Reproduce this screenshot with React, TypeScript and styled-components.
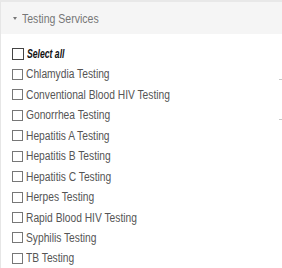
import React from 'react';
import styled, { createGlobalStyle } from 'styled-components';

const GlobalStyle = createGlobalStyle`
  html, body {
    margin: 0;
    padding: 0;
    background: #fff;
  }
  body {
    font-family: 'Liberation Sans', Arial, sans-serif;
  }
`;

const Panel = styled.div`
  width: 282px;
  height: 268px;
  box-sizing: border-box;
  border-top: 2px solid #e8e8e8;
  border-left: 1px solid #e6e6e6;
  overflow: hidden;
  position: relative;
`;

const Header = styled.div`
  height: 32px;
  background: #f5f5f5;
  display: flex;
  align-items: center;
  padding-left: 12px;
  gap: 5px;
  color: #777;
  font-size: 13.5px;
`;

const Caret = styled.span`
  width: 0;
  height: 0;
  border-left: 2.5px solid transparent;
  border-right: 2.5px solid transparent;
  border-top: 3px solid #777;
  margin-top: 1px;
`;

// the source renders a narrow face; squeeze the text to match its widths
const Narrow = styled.span<{ $scale: number }>`
  display: inline-block;
  white-space: nowrap;
  transform: scaleX(${(p) => p.$scale});
  transform-origin: left center;
`;

const List = styled.div`
  display: flex;
  flex-direction: column;
  padding: 13px 0 0 11px;
  gap: 6.45px;
`;

const Row = styled.label<{ $bold?: boolean }>`
  display: flex;
  align-items: center;
  height: 14px;
  gap: 3px;
  font-size: ${(p) => (p.$bold ? 12 : 12.5)}px;
  color: ${(p) => (p.$bold ? '#111' : '#555')};
  font-weight: ${(p) => (p.$bold ? 700 : 400)};
  font-style: ${(p) => (p.$bold ? 'italic' : 'normal')};
`;

const Box = styled.span<{ $big?: boolean }>`
  box-sizing: border-box;
  width: ${(p) => (p.$big ? 12 : 11)}px;
  height: ${(p) => (p.$big ? 12 : 11)}px;
  border: 1px solid ${(p) => (p.$big ? '#444' : '#777')};
  background: #fff;
  flex: none;
`;

const Tick = styled.span<{ $top: number }>`
  position: absolute;
  right: 0;
  top: ${(p) => p.$top}px;
  width: 3px;
  height: 1px;
  background: #c8c8c8;
`;

const services = [
  'Chlamydia Testing',
  'Conventional Blood HIV Testing',
  'Gonorrhea Testing',
  'Hepatitis A Testing',
  'Hepatitis B Testing',
  'Hepatitis C Testing',
  'Herpes Testing',
  'Rapid Blood HIV Testing',
  'Syphilis Testing',
  'TB Testing',
];

export default function App() {
  return (
    <>
      <GlobalStyle />
      <Panel>
        <Header>
          <Caret />
          <Narrow $scale={0.78}>Testing Services</Narrow>
        </Header>
        <List>
          <Row $bold>
            <Box $big />
            <Narrow $scale={0.72}>Select all</Narrow>
          </Row>
          {services.map((s) => (
            <Row key={s}>
              <Box />
              <Narrow $scale={0.82}>{s}</Narrow>
            </Row>
          ))}
        </List>
        <Tick $top={77} />
        <Tick $top={117} />
      </Panel>
    </>
  );
}
